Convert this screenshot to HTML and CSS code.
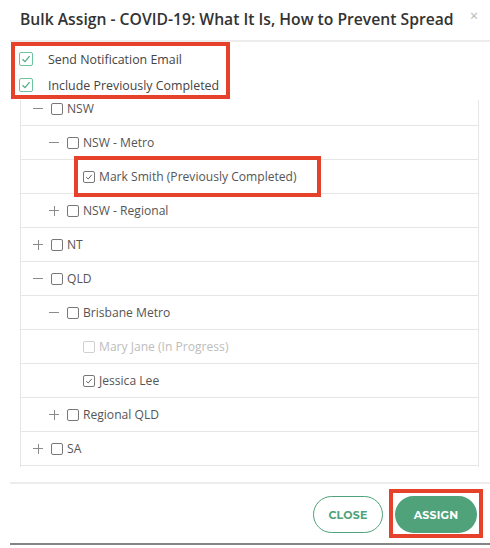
FILE: index.html
```html
<!DOCTYPE html>
<html>
<head>
<meta charset="utf-8">
<link rel="stylesheet" href="styles.css">
</head>
<body>
<div class="modal">
  <div class="header">
    <h1 class="title">Bulk Assign - COVID-19: What It Is, How to Prevent Spread</h1>
    <span class="close-x">×</span>
  </div>
  <div class="options">
    <label class="opt">
      <span class="gbox"><svg width="10" height="10" viewBox="0 0 10 10"><path d="M1.5 5.2 L4 7.6 L8.6 2.2" fill="none" stroke="#4fae83" stroke-width="1.3"/></svg></span>
      <span>Send Notification Email</span>
    </label>
    <label class="opt">
      <span class="gbox"><svg width="10" height="10" viewBox="0 0 10 10"><path d="M1.5 5.2 L4 7.6 L8.6 2.2" fill="none" stroke="#4fae83" stroke-width="1.3"/></svg></span>
      <span>Include Previously Completed</span>
    </label>
    <span class="annot annot-opts"></span>
  </div>
  <div class="tree">
    <div class="tree-inner">
      <div class="row lvl0"><span class="tog minus"></span><span class="cb"></span><span class="lbl">NSW</span></div>
      <div class="row lvl1"><span class="tog minus"></span><span class="cb"></span><span class="lbl">NSW - Metro</span></div>
      <div class="row lvl2"><span class="tog"></span><span class="cb checked"><svg width="8" height="8" viewBox="0 0 8 8"><path d="M1.2 4.2 L3.2 6 L6.8 1.8" fill="none" stroke="#666" stroke-width="1"/></svg></span><span class="lbl">Mark Smith (Previously Completed)</span><span class="annot annot-mark"></span></div>
      <div class="row lvl1"><span class="tog plus"></span><span class="cb"></span><span class="lbl">NSW - Regional</span></div>
      <div class="row lvl0"><span class="tog plus"></span><span class="cb"></span><span class="lbl">NT</span></div>
      <div class="row lvl0"><span class="tog minus"></span><span class="cb"></span><span class="lbl">QLD</span></div>
      <div class="row lvl1"><span class="tog minus"></span><span class="cb"></span><span class="lbl">Brisbane Metro</span></div>
      <div class="row lvl2 disabled"><span class="tog"></span><span class="cb"></span><span class="lbl">Mary Jane (In Progress)</span></div>
      <div class="row lvl2"><span class="tog"></span><span class="cb checked"><svg width="8" height="8" viewBox="0 0 8 8"><path d="M1.2 4.2 L3.2 6 L6.8 1.8" fill="none" stroke="#666" stroke-width="1"/></svg></span><span class="lbl">Jessica Lee</span></div>
      <div class="row lvl1"><span class="tog plus"></span><span class="cb"></span><span class="lbl">Regional QLD</span></div>
      <div class="row lvl0"><span class="tog plus"></span><span class="cb"></span><span class="lbl">SA</span></div>
    </div>
  </div>
  <div class="footer">
    <button class="btn btn-close">CLOSE</button>
    <button class="btn btn-assign">ASSIGN<span class="annot annot-assign"></span></button>
  </div>
</div>
</body>
</html>
```

FILE: styles.css
```css
* { box-sizing: border-box; }
html, body { margin: 0; padding: 0; background: #fff; }
body {
  font-family: "Open Sans", "Noto Sans", sans-serif;
  color: #555;
  width: 490px;
  height: 548px;
  overflow: hidden;
}
.modal {
  margin-left: 10px;
  width: 480px;
  border-bottom: 2px solid #858585;
}
.header {
  height: 42px;
  border-bottom: 2px solid #ececec;
  display: flex;
  align-items: flex-start;
  padding: 0 12px 0 10px;
}
.title {
  margin: 8px 0 0 0;
  font-size: 15.7px;
  font-weight: 600;
  color: #333;
  flex: 1;
  white-space: nowrap;
}
.close-x {
  margin-top: 6px;
  font-size: 14px;
  color: #b5b5b5;
}
.options {
  position: relative;
  padding: 4px 0 0 9px;
  height: 58px;
}
.opt {
  display: flex;
  align-items: center;
  height: 26px;
  font-size: 12.4px;
  color: #444;
}
.gbox {
  width: 14px;
  height: 14px;
  border: 1.5px solid #6cc39c;
  border-radius: 2px;
  display: flex;
  align-items: center;
  justify-content: center;
  margin-right: 15px;
}
.annot {
  position: absolute;
  border: 4px solid #e5412b;
  pointer-events: none;
}
.annot-opts { left: 1px; top: 0; width: 219px; height: 57px; }
.tree {
  margin-left: 10px;
  width: 459px;
  height: 367px;
  border-left: 1px solid #e6e6e6;
  border-right: 1px solid #e6e6e6;
  overflow: hidden;
}
.tree-inner { margin-top: -8px; }
.row {
  position: relative;
  height: 34px;
  border-bottom: 1px solid #e6e6e6;
  display: flex;
  align-items: center;
  padding-left: 12px;
  font-size: 12.1px;
  color: #555;
}
.row.lvl1 { padding-left: 28px; }
.row.lvl2 { padding-left: 44px; }
.tog {
  width: 10px;
  height: 10px;
  margin-right: 8px;
  position: relative;
}
.tog.minus::before, .tog.plus::before {
  content: "";
  position: absolute;
  left: 0; top: 4.5px;
  width: 10px; height: 1px;
  background: #8a8a8a;
}
.tog.plus::after {
  content: "";
  position: absolute;
  left: 4.5px; top: 0;
  width: 1px; height: 10px;
  background: #8a8a8a;
}
.cb {
  width: 12px;
  height: 12px;
  border: 1px solid #777;
  border-radius: 2px;
  margin-right: 4px;
  display: flex;
  align-items: center;
  justify-content: center;
}
.disabled { color: #bdbdbd; }
.disabled .cb { border-color: #cfcfcf; }
.annot-mark { left: 53px; top: -4px; width: 247px; height: 41px; }
.footer {
  margin-top: 15px;
  border-top: 2px solid #ececec;
  height: 61px;
  display: flex;
  justify-content: flex-end;
  align-items: flex-start;
  padding: 12px 13px 0 0;
  gap: 12px;
}
.btn {
  font-family: "Montserrat", "Open Sans", sans-serif;
  font-weight: 700;
  font-size: 11px;
  height: 37px;
  border-radius: 19px;
  letter-spacing: 0.2px;
  position: relative;
}
.btn-close {
  width: 70px;
  border: 1px solid #4fa27a;
  background: #fff;
  color: #4fa27a;
}
.btn-assign {
  width: 82px;
  border: none;
  background: #4fa27a;
  color: #fff;
}
.annot-assign { left: -6px; top: -7px; width: 94px; height: 49px; }
```
